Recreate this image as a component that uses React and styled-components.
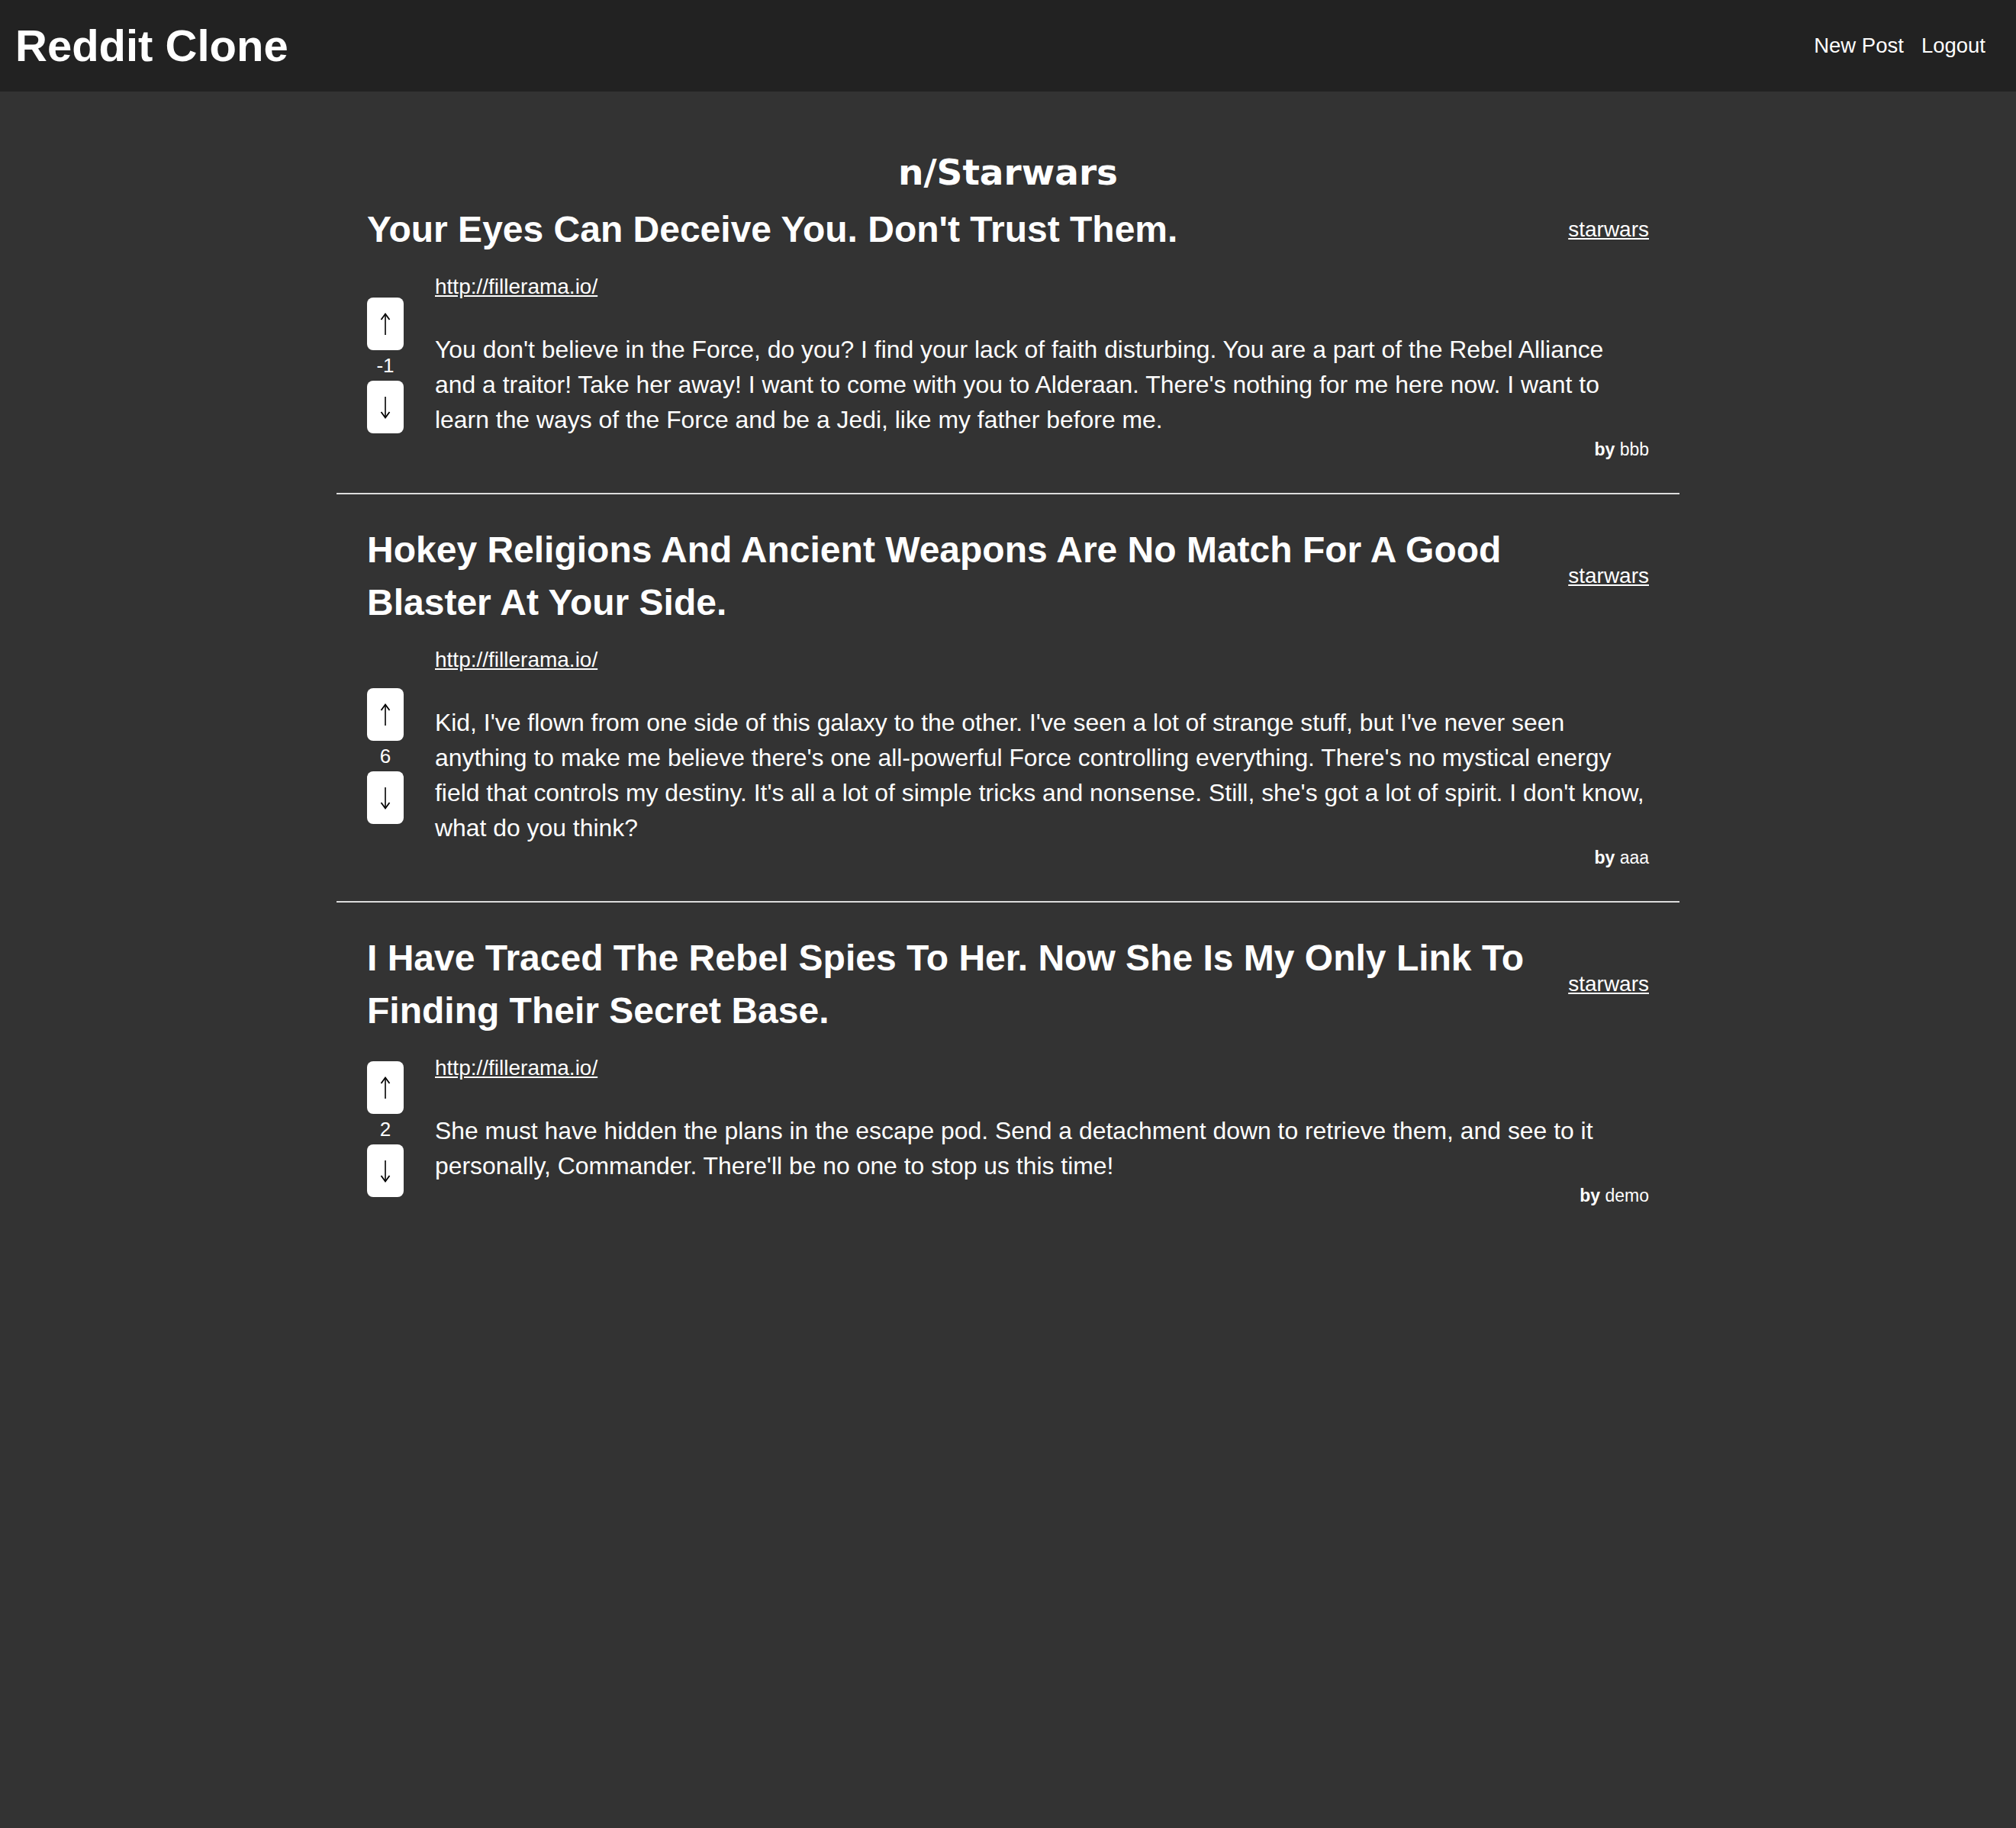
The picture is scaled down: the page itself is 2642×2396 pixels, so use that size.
import React from 'react';
import styled, { createGlobalStyle } from 'styled-components';

const GlobalStyle = createGlobalStyle`
  html, body {
    margin: 0;
    padding: 0;
    background-color: #333333;
    color: #ffffff;
    font-family: "Liberation Sans", Arial, sans-serif;
  }
  a {
    color: #ffffff;
  }
`;

const posts = [
  {
    id: 1,
    title: "Your Eyes Can Deceive You. Don't Trust Them.",
    url: 'http://fillerama.io/',
    score: -1,
    body: "You don't believe in the Force, do you? I find your lack of faith disturbing. You are a part of the Rebel Alliance and a traitor! Take her away! I want to come with you to Alderaan. There's nothing for me here now. I want to learn the ways of the Force and be a Jedi, like my father before me.",
    author: 'bbb',
  },
  {
    id: 2,
    title: 'Hokey Religions And Ancient Weapons Are No Match For A Good Blaster At Your Side.',
    url: 'http://fillerama.io/',
    score: 6,
    body: "Kid, I've flown from one side of this galaxy to the other. I've seen a lot of strange stuff, but I've never seen anything to make me believe there's one all-powerful Force controlling everything. There's no mystical energy field that controls my destiny. It's all a lot of simple tricks and nonsense. Still, she's got a lot of spirit. I don't know, what do you think?",
    author: 'aaa',
  },
  {
    id: 3,
    title: 'I Have Traced The Rebel Spies To Her. Now She Is My Only Link To Finding Their Secret Base.',
    url: 'http://fillerama.io/',
    score: 2,
    body: "She must have hidden the plans in the escape pod. Send a detachment down to retrieve them, and see to it personally, Commander. There'll be no one to stop us this time!",
    author: 'demo',
  },
];

const Header = styled.header`
  display: flex;
  align-items: center;
  justify-content: space-between;
  height: 120px;
  padding: 0 40px 0 20px;
  background-color: #222222;
`;

const Brand = styled.h1`
  margin: 0;
  font-size: 58px;
  font-weight: bold;
  line-height: 1;
`;

const Nav = styled.nav`
  display: flex;
  align-items: center;
  gap: 23px;
`;

const NavLink = styled.a`
  font-size: 27.5px;
  text-decoration: none;
`;

const Main = styled.main`
  max-width: 1760px;
  margin: 0 auto;
  padding-top: 72px;
`;

const PageTitle = styled.h2`
  margin: 0 0 6px;
  text-align: center;
  font-family: "DejaVu Sans", sans-serif;
  font-size: 47px;
  font-weight: bold;
  line-height: 68px;
`;

const PostItem = styled.article`
  padding: 0 40px 41px;

  & + & {
    border-top: 2px solid #dddddd;
    padding-top: 38px;
  }
`;

const TitleRow = styled.div`
  display: flex;
  align-items: center;
  justify-content: space-between;
  gap: 40px;
`;

const PostTitle = styled.h3`
  flex: 1;
  margin: 0;
  font-size: 48px;
  font-weight: bold;
  line-height: 69px;
`;

const SubLink = styled.a`
  flex-shrink: 0;
  font-size: 28px;
  text-decoration: underline;
`;

const PostRow = styled.div`
  display: flex;
  align-items: center;
  gap: 41px;
  margin-top: 18px;
`;

const VoteColumn = styled.div`
  display: flex;
  flex-direction: column;
  align-items: center;
  width: 48px;
  flex-shrink: 0;
`;

const VoteButton = styled.button`
  display: flex;
  align-items: center;
  justify-content: center;
  width: 48px;
  height: 69px;
  padding: 0;
  border: none;
  border-radius: 8px;
  background-color: #ffffff;
  color: #000000;

  & svg {
    transform: ${(props) => (props.down ? 'rotate(180deg)' : 'none')};
  }
`;

const Score = styled.span`
  font-size: 26px;
  line-height: 40px;
`;

const PostContent = styled.div`
  flex: 1;
  min-width: 0;
`;

const PostUrl = styled.a`
  display: inline-block;
  font-size: 28px;
  line-height: 46px;
`;

const PostBody = styled.p`
  margin: 36px 0 0;
  font-size: 31.9px;
  line-height: 46px;
`;

const Byline = styled.div`
  text-align: right;
  font-size: 23px;
  line-height: 32px;

  & b {
    font-weight: bold;
  }
`;

const Arrow = () => (
  <svg width="14" height="30" viewBox="0 0 14 30" fill="none">
    <line x1="7" y1="2" x2="7" y2="29" stroke="#000" strokeWidth="1.6" />
    <path d="M1.5 9 L7 1.5 L12.5 9" stroke="#000" strokeWidth="1.8" strokeLinejoin="miter" />
  </svg>
);

const Post = ({ post }) => (
  <PostItem>
    <TitleRow>
      <PostTitle>{post.title}</PostTitle>
      <SubLink href="#">starwars</SubLink>
    </TitleRow>
    <PostRow>
      <VoteColumn>
        <VoteButton aria-label="upvote">
          <Arrow />
        </VoteButton>
        <Score>{post.score}</Score>
        <VoteButton down aria-label="downvote">
          <Arrow />
        </VoteButton>
      </VoteColumn>
      <PostContent>
        <PostUrl href="#">{post.url}</PostUrl>
        <PostBody>{post.body}</PostBody>
        <Byline>
          <b>by</b> {post.author}
        </Byline>
      </PostContent>
    </PostRow>
  </PostItem>
);

const App = () => {
  return (
    <>
      <GlobalStyle />
      <Header>
        <Brand>Reddit Clone</Brand>
        <Nav>
          <NavLink href="#">New Post</NavLink>
          <NavLink href="#">Logout</NavLink>
        </Nav>
      </Header>
      <Main>
        <PageTitle>n/Starwars</PageTitle>
        {posts.map((post) => (
          <Post key={post.id} post={post} />
        ))}
      </Main>
    </>
  );
};

export default App;
